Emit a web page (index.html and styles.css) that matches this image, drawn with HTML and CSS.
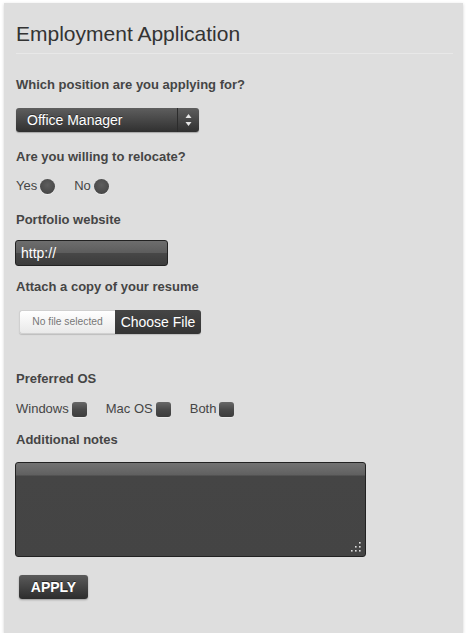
FILE: index.html
```html
<!DOCTYPE html>
<html lang="en">
<head>
<meta charset="utf-8">
<title>Employment Application</title>
<link rel="stylesheet" href="styles.css">
</head>
<body>
<form class="card">
  <h1 class="title">Employment Application</h1>

  <div class="label l-position">Which position are you applying for?</div>
  <div class="select">
    <span class="select-value">Office Manager</span>
    <span class="select-arrows">
      <svg width="7" height="14" viewBox="0 0 7 14"><polygon points="0.5,5 3.5,1 6.5,5" fill="#e6e6e6"/><polygon points="0.5,9 3.5,13 6.5,9" fill="#e6e6e6"/></svg>
    </span>
  </div>

  <div class="label l-relocate">Are you willing to relocate?</div>
  <div class="options radios">
    <span class="opt">Yes <span class="radio"></span></span>
    <span class="opt">No <span class="radio"></span></span>
  </div>

  <div class="label l-portfolio">Portfolio website</div>
  <input class="url" type="text" value="http://">

  <div class="label l-resume">Attach a copy of your resume</div>
  <div class="file">
    <span class="file-name">No file selected</span>
    <span class="file-btn">Choose File</span>
  </div>

  <div class="label l-os">Preferred OS</div>
  <div class="options checks">
    <span class="opt">Windows <span class="check"></span></span>
    <span class="opt">Mac OS <span class="check"></span></span>
    <span class="opt">Both <span class="check"></span></span>
  </div>

  <div class="label l-notes">Additional notes</div>
  <div class="notes-wrap">
    <textarea class="notes"></textarea>
    <svg class="grip" width="12" height="12" viewBox="0 0 12 12">
      <rect x="9" y="1" width="1.6" height="1.6" fill="#ddd"/>
      <rect x="5" y="5" width="1.6" height="1.6" fill="#ddd"/>
      <rect x="9" y="5" width="1.6" height="1.6" fill="#ddd"/>
      <rect x="1" y="9" width="1.6" height="1.6" fill="#ddd"/>
      <rect x="5" y="9" width="1.6" height="1.6" fill="#ddd"/>
      <rect x="9" y="9" width="1.6" height="1.6" fill="#ddd"/>
    </svg>
  </div>

  <button class="apply" type="button">APPLY</button>
</form>
</body>
</html>
```

FILE: styles.css
```css
html, body {
  margin: 0;
  padding: 0;
  background: #ffffff;
}

body {
  font-family: "Liberation Sans", Arial, sans-serif;
}

.card {
  box-sizing: border-box;
  width: 459px;
  height: 630px;
  margin: 3px 0 0 4px;
  padding: 19px 10px 0 12px;
  background: #dedede;
  box-shadow: 0 1px 3px rgba(0, 0, 0, 0.18);
}

.title {
  margin: 0;
  padding-bottom: 7px;
  font-size: 21px;
  line-height: 24px;
  font-weight: normal;
  color: #333;
  border-bottom: 1px solid #e8e8e8;
}

.label {
  display: block;
  font-size: 13px;
  line-height: 16px;
  font-weight: bold;
  color: #454545;
}

.l-position { margin-top: 23px; }
.l-relocate { margin-top: 17px; }
.l-portfolio { margin-top: 18px; }
.l-resume { margin-top: 13px; }
.l-os { margin-top: 37px; }
.l-notes { margin-top: 15px; }

/* select */
.select {
  display: flex;
  width: 183px;
  height: 24px;
  margin-top: 15px;
  border-radius: 3px;
  background: linear-gradient(#5e5e5e, #303030);
  box-shadow: 0 1px 1px rgba(0, 0, 0, 0.25);
}

.select-value {
  flex: 1;
  padding-left: 11px;
  font-size: 14px;
  line-height: 24px;
  color: #fff;
  text-shadow: 0 -1px 0 rgba(0, 0, 0, 0.4);
}

.select-arrows {
  width: 21px;
  display: flex;
  align-items: center;
  justify-content: center;
  border-left: 1px solid #2c2c2c;
}

/* option rows */
.options {
  display: flex;
  height: 16px;
  font-size: 13px;
  line-height: 16px;
  color: #454545;
}

.radios { margin-top: 13px; gap: 19px; }
.checks { margin-top: 14px; gap: 19px; }

.opt {
  display: flex;
  align-items: center;
  gap: 3px;
}

.radio {
  width: 15px;
  height: 15px;
  border-radius: 50%;
  background: radial-gradient(circle at 50% 40%, #5e5e5e 0%, #4c4c4c 60%, #3c3c3c 100%);
  box-shadow: 0 1px 0 rgba(255, 255, 255, 0.4);
}

.check {
  width: 15px;
  height: 15px;
  border-radius: 3px;
  background: linear-gradient(#686868, #4a4a4a 50%, #3c3c3c);
  box-shadow: 0 1px 0 rgba(255, 255, 255, 0.4);
}

/* text input */
.url {
  display: block;
  box-sizing: border-box;
  width: 153px;
  height: 26px;
  margin: 12px 0 0 -1px;
  padding: 0 0 0 5px;
  border: 1px solid #222;
  border-radius: 3px;
  background: linear-gradient(#6e6e6e 0%, #5d5d5d 48%, #474747 52%, #3b3b3b 100%);
  font-family: "Liberation Sans", Arial, sans-serif;
  font-size: 14px;
  color: #fff;
  outline: none;
}

/* file */
.file {
  display: flex;
  width: 182px;
  height: 24px;
  margin: 15px 0 0 3px;
  border-radius: 3px;
  box-shadow: 0 1px 1px rgba(0, 0, 0, 0.15);
}

.file-name {
  width: 96px;
  box-sizing: border-box;
  border: 1px solid #d0d0d0;
  border-right: none;
  border-radius: 3px 0 0 3px;
  background: linear-gradient(#ffffff, #e9e9e9);
  font-size: 10.3px;
  line-height: 22px;
  color: #777;
  text-align: center;
}

.file-btn {
  flex: 1;
  border-radius: 0 3px 3px 0;
  background: linear-gradient(#454545, #343434);
  font-size: 14px;
  line-height: 24px;
  color: #fff;
  text-align: center;
}

/* textarea */
.notes-wrap {
  position: relative;
  width: 351px;
  margin: 14px 0 0 -1px;
}

.notes {
  display: block;
  box-sizing: border-box;
  width: 351px;
  height: 95px;
  margin: 0;
  border: 1px solid #222;
  border-radius: 3px;
  background: linear-gradient(#737373 0px, #606060 12px, #454545 13px, #444 100%);
  resize: none;
  outline: none;
}

.grip {
  position: absolute;
  right: 4px;
  bottom: 4px;
}

/* button */
.apply {
  display: block;
  width: 69px;
  height: 24px;
  margin: 18px 0 0 3px;
  padding: 0;
  border: none;
  border-radius: 3px;
  background: linear-gradient(#5a5a5a, #2c2c2c);
  box-shadow: 0 1px 2px rgba(0, 0, 0, 0.3);
  font-family: "Liberation Sans", Arial, sans-serif;
  font-size: 14px;
  font-weight: bold;
  line-height: 24px;
  color: #fff;
  text-shadow: 0 -1px 0 rgba(0, 0, 0, 0.5);
}
```
